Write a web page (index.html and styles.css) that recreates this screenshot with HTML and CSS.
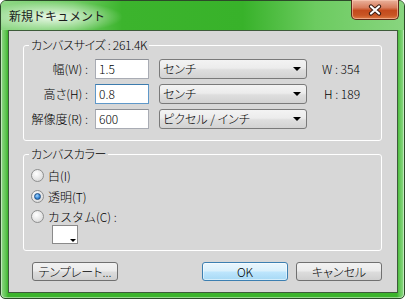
FILE: index.html
```html
<!DOCTYPE html>
<html lang="ja">
<head>
    <meta charset="UTF-8">
    <title>新規ドキュメント</title>
    <link rel="stylesheet" href="styles.css">
</head>
<body>
    <div class="window">
        <!-- タイトルバー -->
        <div class="titlebar">
            <span class="title">新規ドキュメント</span>
            <button class="close">
                <svg width="16" height="12" viewBox="0 0 16 12">
                    <path d="M4 2.5 L12 9.5 M12 2.5 L4 9.5" stroke="#3b1e14" stroke-width="4.2" stroke-linecap="round" fill="none"/>
                    <path d="M4 2.5 L12 9.5 M12 2.5 L4 9.5" stroke="#ffffff" stroke-width="2.2" stroke-linecap="round" fill="none"/>
                </svg>
            </button>
        </div>

        <div class="client">
            <!-- カンバスサイズ -->
            <fieldset class="group size-group">
                <legend>カンバスサイズ : 261.4K</legend>
                <div class="row">
                    <label class="label">幅(W) :</label>
                    <div class="input">1.5</div>
                    <div class="select">センチ<span class="arrow"></span></div>
                    <span class="info">W : 354</span>
                </div>
                <div class="row">
                    <label class="label">高さ(H) :</label>
                    <div class="input focused">0.8</div>
                    <div class="select">センチ<span class="arrow"></span></div>
                    <span class="info info-h">H : 189</span>
                </div>
                <div class="row">
                    <label class="label">解像度(R) :</label>
                    <div class="input">600</div>
                    <div class="select">ピクセル / インチ<span class="arrow"></span></div>
                </div>
            </fieldset>

            <!-- カンバスカラー -->
            <fieldset class="group color-group">
                <legend>カンバスカラー</legend>
                <div class="radio-row"><span class="radio"></span>白(I)</div>
                <div class="radio-row"><span class="radio checked"></span>透明(T)</div>
                <div class="radio-row custom-row"><span class="radio"></span>カスタム(C) :</div>
                <div class="swatch"><span class="arrow small"></span></div>
            </fieldset>

            <!-- ボタン -->
            <div class="buttons">
                <button class="btn template">テンプレート...</button>
                <button class="btn default">OK</button>
                <button class="btn">キャンセル</button>
            </div>
        </div>
    </div>
</body>
</html>
```

FILE: styles.css
```css
body {
    margin: 0;
    background: #ffffff;
    font-family: "Noto Sans CJK JP", sans-serif;
    font-size: 12px;
    font-weight: 300;
    color: #000;
    overflow: hidden;
}

/* ウィンドウ枠 */
.window {
    width: 405px;
    height: 299px;
    box-sizing: border-box;
    border: 1px solid #2c4a29;
    border-radius: 6px 6px 5px 5px;
    padding: 0 6px 5px 7px;
    display: flex;
    flex-direction: column;
    background:
        linear-gradient(90deg, #92da8a 0, #5cc34f 5px, #3bb42c 7px, #3bb42c calc(100% - 7px), #5cc34f calc(100% - 5px), #92da8a 100%);
    box-shadow: inset 0 0 0 1px rgba(255, 255, 255, 0.45);
}

/* タイトルバー */
.titlebar {
    height: 29px;
    flex-shrink: 0;
    display: flex;
    justify-content: space-between;
    align-items: flex-start;
    margin: 0 -6px 0 -7px;
    padding: 0 5px 0 7px;
    background:
        radial-gradient(ellipse 70px 16px at 52px 16px, rgba(255, 255, 255, 0.85), rgba(255, 255, 255, 0) 100%),
        linear-gradient(90deg, #8fd886 0%, #72cc66 18%, #3cb42d 30%, #38b22a 60%, #6ccb60 78%, #88d57f 100%);
    border-radius: 5px 5px 0 0;
}

.title {
    margin-top: 8px;
    margin-left: 1px;
    font-size: 12px;
    font-weight: 400;
    line-height: 14px;
    color: #1b1b1b;
}

.close {
    width: 48px;
    height: 20px;
    margin-top: -1px;
    padding: 0;
    border: 1px solid #5b2a1a;
    border-top: none;
    border-radius: 0 0 5px 5px;
    background: linear-gradient(#eab29c 0%, #d87d5d 40%, #c44a1d 55%, #c85524 80%, #dd7a44 100%);
    box-shadow: inset 0 0 0 1px rgba(255, 210, 190, 0.55);
    display: flex;
    align-items: center;
    justify-content: center;
}

/* クライアント領域 */
.client {
    flex: 1;
    border: 1px solid #3d5b3a;
    background: #d7d7d7;
    padding: 0 15px 0 14px;
    display: flex;
    flex-direction: column;
}

/* グループボックス */
.group {
    margin: 0;
    border: 1px solid #ffffff;
    border-radius: 3px;
    padding: 0;
    min-width: 0;
}

.group legend {
    margin-left: 5px;
    padding: 0 2px;
    line-height: 14px;
    letter-spacing: -0.3px;
    font-feature-settings: "palt";
}

.size-group {
    margin-top: 7px;
    padding: 4px 0 9px 0;
}

.color-group {
    margin-top: 6px;
    padding: 4px 0 6px 0;
}

/* 入力行 */
.row {
    height: 25px;
    display: flex;
    align-items: center;
}

.label {
    width: 64px;
    text-align: right;
    font-feature-settings: "palt";
}

.input {
    width: 54px;
    height: 20px;
    box-sizing: border-box;
    margin-left: 7px;
    padding-left: 3px;
    border: 1px solid #a9acb4;
    border-top-color: #8d9096;
    background: #ffffff;
    line-height: 18px;
}

.input.focused {
    border-color: #5f98c9;
    border-top-color: #3d7bad;
}

.select {
    width: 148px;
    height: 20px;
    box-sizing: border-box;
    margin-left: 10px;
    padding-left: 3px;
    border: 1px solid #7a7a7a;
    border-radius: 3px;
    background: linear-gradient(#f3f3f3 0%, #ececec 45%, #dedede 55%, #d2d2d2 100%);
    display: flex;
    align-items: center;
    font-feature-settings: "palt";
}

.arrow {
    margin-left: auto;
    margin-right: 5px;
    margin-top: 1px;
    width: 0;
    height: 0;
    border-left: 4px solid transparent;
    border-right: 4px solid transparent;
    border-top: 4px solid #000;
}

.info {
    margin-left: 15px;
}

.info-h {
    margin-left: 17px;
}

/* ラジオボタン */
.radio-row {
    height: 21px;
    display: flex;
    align-items: center;
    padding-left: 7px;
}

.custom-row {
    height: 18px;
}

.radio {
    width: 11px;
    height: 11px;
    margin-right: 4px;
    border: 1px solid #8e8f8f;
    border-radius: 50%;
    background: radial-gradient(circle at 40% 35%, #ffffff 0%, #e8e8e8 50%, #cfcfcf 100%);
    display: flex;
    align-items: center;
    justify-content: center;
}

.radio.checked::after {
    content: "";
    width: 5px;
    height: 5px;
    border-radius: 50%;
    border: 1px solid #1f4f86;
    background: radial-gradient(circle at 40% 35%, #a5d6ff 0%, #3a8bd8 55%, #1c5aa0 100%);
}

/* カスタムカラー */
.swatch {
    width: 26px;
    height: 19px;
    box-sizing: border-box;
    margin-left: 28px;
    border: 1px solid #8a8a8a;
    background: #ffffff;
    display: flex;
    align-items: flex-end;
}

.arrow.small {
    margin-right: 1px;
    margin-bottom: 1px;
    border-left-width: 3px;
    border-right-width: 3px;
    border-top-width: 3px;
}

/* ボタン */
.buttons {
    margin-top: 11px;
    display: flex;
    gap: 8px;
}

.btn {
    width: 86px;
    height: 19px;
    padding: 0;
    border: 1px solid #707070;
    border-radius: 3px;
    background: linear-gradient(#f2f2f2 0%, #ebebeb 48%, #dddddd 52%, #cfcfcf 100%);
    font-family: inherit;
    font-size: 12px;
    font-weight: 300;
    line-height: 15px;
    color: #000;
    font-feature-settings: "palt";
}

.btn.template {
    margin-left: 9px;
    margin-right: auto;
}

.btn.default {
    border-color: #3c7fb1;
    background: linear-gradient(#eaf6fd 0%, #d9f0fc 48%, #bee6fd 52%, #a7d9f5 100%);
    box-shadow: inset 0 0 0 1px rgba(255, 255, 255, 0.5);
}
```
